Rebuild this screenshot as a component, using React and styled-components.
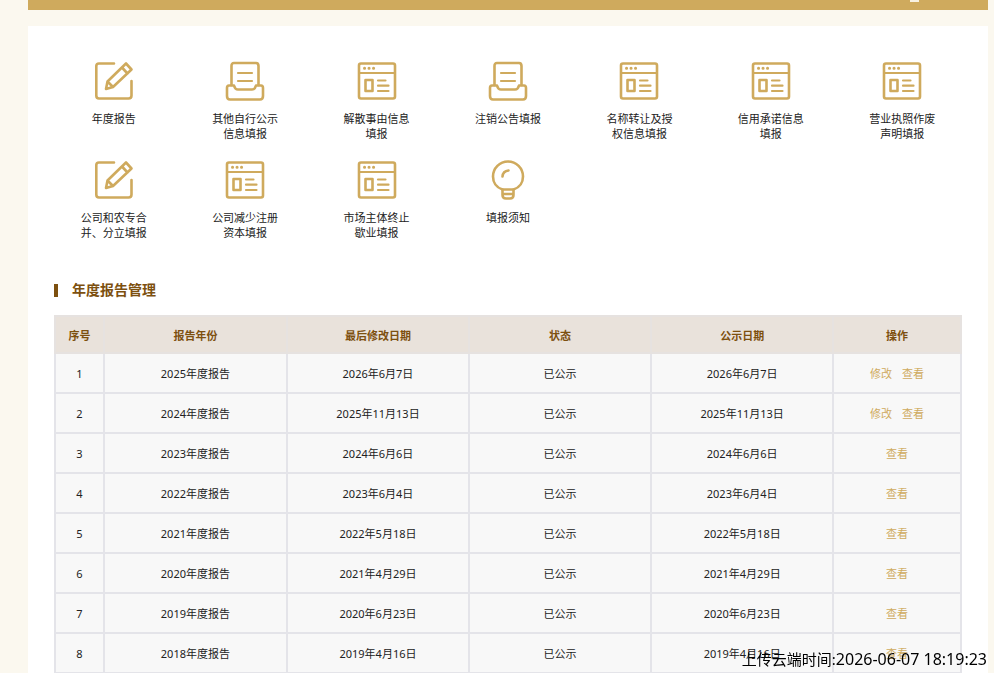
import React from "react";
import styled, { createGlobalStyle } from "styled-components";

const gold = "#cfaa5d";
const brown = "#7d500f";
const line = "#e4e4e9";

const GlobalStyle = createGlobalStyle`
  * {
    box-sizing: border-box;
  }

  body {
    margin: 0;
    background-color: #fbf8ef;
    color: #222;
    font-family: "Noto Sans", "Noto Sans CJK SC", sans-serif;
    font-size: 11px;
  }
`;

const Page = styled.div`
  display: flex;
  flex-direction: column;
  gap: 16px;
  height: 100vh;
  overflow: hidden;
  padding: 0 6px 0 28px;
`;

const TopBar = styled.header`
  display: flex;
  justify-content: flex-end;
  flex-shrink: 0;
  height: 10px;
  padding-right: 69px;
  background-color: ${gold};
`;

const TopMark = styled.span`
  width: 9px;
  height: 2px;
  background-color: #f8f1e2;
`;

const Card = styled.main`
  flex: 1 0 auto;
  background-color: white;
`;

const Menu = styled.nav`
  display: grid;
  grid-template-columns: repeat(7, 1fr);
  row-gap: 19px;
  padding: 35px 20px 0;
`;

const MenuItem = styled.a`
  display: flex;
  flex-direction: column;
  align-items: center;
  gap: 10px;
  color: #222;
  line-height: 15px;
  text-align: center;
  text-decoration: none;

  svg {
    width: 40px;
    height: 40px;
    fill: none;
    stroke: ${gold};
    stroke-width: 2.6;
    stroke-linecap: round;
    stroke-linejoin: round;
  }

  span {
    width: 70px;
  }
`;

const Section = styled.section`
  padding: 40px 26px 0;
`;

const Title = styled.h2`
  display: flex;
  align-items: center;
  gap: 14px;
  margin: 0 0 15px;
  color: ${brown};
  font-size: 14px;
  font-weight: 700;
  line-height: 20px;

  &::before {
    content: "";
    width: 4px;
    height: 13px;
    background-color: ${brown};
  }
`;

const Table = styled.table`
  width: 100%;
  border: 2px solid ${line};
  border-collapse: collapse;
  table-layout: fixed;
  text-align: center;

  th,
  td {
    padding: 0;
    border: 2px solid ${line};
  }

  th {
    height: 37px;
    background-color: #e9e2db;
    border-color: #e6e2e0;
    color: ${brown};
    font-weight: 700;
  }

  td {
    height: 40px;
    background-color: #f8f8f8;
  }
`;

const Col = styled.col`
  width: ${(props) => props.$width};
`;

const Action = styled.a`
  color: ${gold};
  text-decoration: none;

  & + & {
    margin-left: 10px;
  }
`;

const UploadTime = styled.div`
  position: fixed;
  right: 7px;
  bottom: 4px;
  color: #000;
  font-size: 15px;
  line-height: 20px;

  time {
    font-size: 16px;
  }
`;

const EditIcon = () => (
  <svg viewBox="0 0 40 40" aria-hidden="true">
    <path d="M20 2.5H5Q2.3 2.5 2.3 5V34.5Q2.3 37.5 5 37.5H34.5Q37.5 37.5 37.5 34.5V20" />
    <path d="M12 28L13.5 20.5L32 2.5L37.5 8.5L19 26Z M28 6.5L33.5 12.5 M13.5 20.5L19 26" />
  </svg>
);

const TrayIcon = () => (
  <svg viewBox="0 0 40 40" aria-hidden="true">
    <path d="M6.5 24V5Q6.5 2 9 2H31Q33.5 2 33.5 5V24" />
    <path d="M6.5 24.5H4Q2 24.5 2 27V35Q2 38.5 5 38.5H35Q38 38.5 38 35V27Q38 24.5 36 24.5H31Q30 28.5 27 28.5H13Q10 28.5 9 24.5H6.5" />
    <path d="M13 12H27M13 20H27" strokeWidth="2.2" />
  </svg>
);

const WindowIcon = () => (
  <svg viewBox="0 0 40 40" aria-hidden="true">
    <rect x="2" y="2.5" width="36" height="35" rx="2" />
    <path d="M2 12H38" strokeWidth="2.2" />
    <path d="M7.5 7.3H7.6M12 7.3H12.1M16.5 7.3H16.6" strokeWidth="3" />
    <path d="M8.5 19H15.5V30H8.5Z" />
    <path d="M21 19.5H28.5M21 24.7H31.5M21 30H31.5" strokeWidth="2.2" />
  </svg>
);

const BulbIcon = () => (
  <svg viewBox="0 0 40 40" aria-hidden="true">
    <path d="M14.5 29.5C8 27.5 5 22 5 16.5A15 15 0 0 1 35 16.5C35 22 32 27.5 25.5 29.5Z" />
    <path d="M14.5 29.5V35Q14.5 38.5 18 38.5H22Q25.5 38.5 25.5 35V29.5M14.5 34H25.5" />
    <path d="M14.5 16.5Q15 11 20.5 10.5" />
  </svg>
);

const menu = [
  { icon: EditIcon, text: ["年度报告"] },
  { icon: TrayIcon, text: ["其他自行公示", "信息填报"] },
  { icon: WindowIcon, text: ["解散事由信息", "填报"] },
  { icon: TrayIcon, text: ["注销公告填报"] },
  { icon: WindowIcon, text: ["名称转让及授", "权信息填报"] },
  { icon: WindowIcon, text: ["信用承诺信息", "填报"] },
  { icon: WindowIcon, text: ["营业执照作废", "声明填报"] },
  { icon: EditIcon, text: ["公司和农专合", "并、分立填报"] },
  { icon: WindowIcon, text: ["公司减少注册", "资本填报"] },
  { icon: WindowIcon, text: ["市场主体终止", "歇业填报"] },
  { icon: BulbIcon, text: ["填报须知"] },
];

const columns = [
  { name: "序号", width: "5.4%" },
  { name: "报告年份", width: "20.2%" },
  { name: "最后修改日期", width: "20.1%" },
  { name: "状态", width: "20.1%" },
  { name: "公示日期", width: "20.1%" },
  { name: "操作", width: "14.1%" },
];

const reports = [
  { year: 2025, date: "2026年6月7日", editable: true },
  { year: 2024, date: "2025年11月13日", editable: true },
  { year: 2023, date: "2024年6月6日" },
  { year: 2022, date: "2023年6月4日" },
  { year: 2021, date: "2022年5月18日" },
  { year: 2020, date: "2021年4月29日" },
  { year: 2019, date: "2020年6月23日" },
  { year: 2018, date: "2019年4月16日" },
];

const App = () => {
  return (
    <>
      <GlobalStyle />
      <Page lang="zh-CN">
        <TopBar>
          <TopMark />
        </TopBar>
        <Card>
          <Menu>
            {menu.map(({ icon: Icon, text }) => (
              <MenuItem href="#" key={text.join("")}>
                <Icon />
                <span>
                  {text[0]}
                  {text[1] ? <br /> : null}
                  {text[1]}
                </span>
              </MenuItem>
            ))}
          </Menu>
          <Section>
            <Title>年度报告管理</Title>
            <Table>
              <colgroup>
                {columns.map((col) => (
                  <Col key={col.name} $width={col.width} />
                ))}
              </colgroup>
              <thead>
                <tr>
                  {columns.map((col) => (
                    <th key={col.name} scope="col">{col.name}</th>
                  ))}
                </tr>
              </thead>
              <tbody>
                {reports.map((report, index) => (
                  <tr key={report.year}>
                    <td>{index + 1}</td>
                    <td>{report.year}年度报告</td>
                    <td>{report.date}</td>
                    <td>已公示</td>
                    <td>{report.date}</td>
                    <td>
                      {report.editable ? <Action href="#">修改</Action> : null}
                      <Action href="#">查看</Action>
                    </td>
                  </tr>
                ))}
              </tbody>
            </Table>
          </Section>
        </Card>
      </Page>
      <UploadTime>
        上传云端时间:<time>2026-06-07 18:19:23</time>
      </UploadTime>
    </>
  );
};

export default App;
